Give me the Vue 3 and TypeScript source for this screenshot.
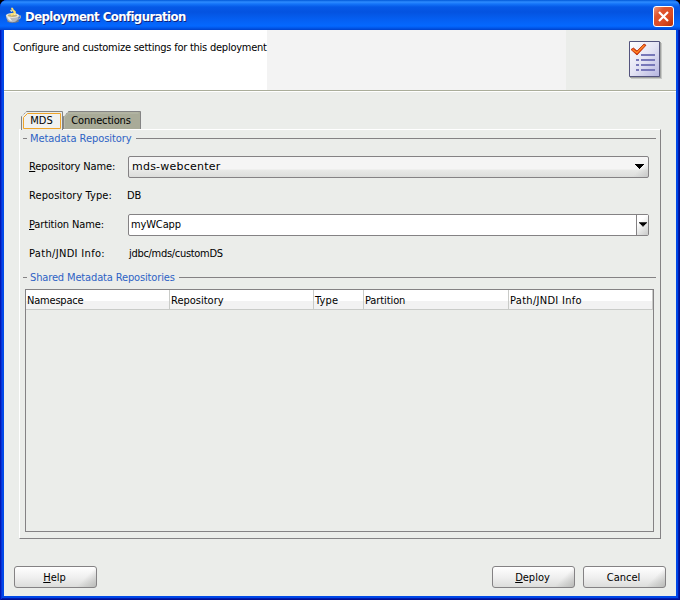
<script setup lang="ts">
import { ref } from 'vue'

interface Column {
  label: string
  width: number
  spacing: number
}

const activeTab = ref<string>('MDS')
const partition = ref<string>('myWCapp')
const columns: Column[] = [
  { label: 'Namespace', width: 144, spacing: -0.2 },
  { label: 'Repository', width: 144, spacing: 0 },
  { label: 'Type', width: 50, spacing: 0.2 },
  { label: 'Partition', width: 145, spacing: -0.1 },
  { label: 'Path/JNDI Info', width: 144, spacing: 0.3 },
]
</script>

<template>
  <div class="window">
    <header class="titlebar">
      <svg class="cup" width="18" height="18" viewBox="0 0 18 18">
        <ellipse cx="8" cy="14" rx="6" ry="1.8" fill="#777b83" />
        <path d="M13 9h2.2q1.2 2-2.6 3.4" fill="none" stroke="#a4a9b1" stroke-width="1.3" />
        <path d="M1 8.5Q1 14.8 7.3 15.2 13.7 14.8 14 8.5z" fill="#b7babf" />
        <path d="M2 9Q3 13.4 7 14 4.5 11 4.5 9z" fill="#f3f3ef" />
        <ellipse cx="7.5" cy="8.5" rx="6.5" ry="2.4" fill="#e7e5dc" />
        <ellipse cx="7.5" cy="8.6" rx="4.8" ry="1.3" fill="#c4b078" />
        <path d="M7 .8Q7 3 9 4.2 11 5.3 8.7 6.4L6 8.2" fill="none" stroke="#ffe16b" stroke-width="2" />
        <path d="M5.5 3.3l1.6 1.2M9 7.5l2-.8" stroke="#fff5b8" stroke-width="1.2" />
      </svg>
      <h1>Deployment Configuration</h1>
      <button class="close" aria-label="Close">
        <svg width="21" height="21" viewBox="0 0 21 21">
          <path d="M6 6l9 9M15 6l-9 9" stroke="#fff" stroke-width="2.2" />
        </svg>
      </button>
    </header>

    <main class="body">
      <section class="banner">
        <p>Configure and customize settings for this deployment</p>
        <svg class="checklist" width="36" height="40" viewBox="0 0 36 40">
          <defs>
            <linearGradient id="paper" x1="0" y1="0" x2="1" y2="1">
              <stop offset="0" stop-color="#fff" />
              <stop offset=".5" stop-color="#e4e4f4" />
              <stop offset="1" stop-color="#b4b4df" />
            </linearGradient>
          </defs>
          <path d="M3 3h31v36H3z" fill="#c7c9c6" />
          <path d="M2 2h31v36H2z" fill="#9fa19f" />
          <path d="M1.5 1.5h30v35h-30z" fill="url(#paper)" stroke="#53537d" />
          <path d="M13 14h14v2H13zM8 19h3v2H8zM13 19h14v2H13zM8 24h3v2H8zM13 24h14v2H13zM8 29h3v2H8zM13 29h14v2H13z" fill="#7777b9" />
          <path d="M3 9.5L5.5 8 9 11l7-7 2 1.2L9 15z" fill="#e03c08" stroke="#b52a08" stroke-width=".8" />
          <path d="M4.5 9.5L9 12.7l7.4-7.4" fill="none" stroke="#ff8a2b" stroke-width="1.4" />
        </svg>
      </section>

      <nav class="tabs">
        <button class="tab mds" @click="activeTab = 'MDS'">
          <svg width="43" height="19" viewBox="0 0 43 19">
            <path d="M.5 19V5.5l5-5h36V19" fill="#ebedea" stroke="#848484" />
            <path d="M2.5 17.5V6.5l4-4h33v15z" fill="#f1f2f0" stroke="#efa52b" />
            <path d="M1 5l4-4" stroke="#fff" stroke-dasharray="1 1" />
          </svg>
          <span>MDS</span>
        </button>
        <button class="tab connections" @click="activeTab = 'Connections'">
          <svg width="79" height="19" viewBox="0 0 79 19">
            <path d="M.5 18V5.5l5-5h72V18" fill="#a9ab98" stroke="#848484" />
            <path d="M1.5 17V6l4-4h70" fill="none" stroke="#b9bbab" />
            <path d="M1 5l4-4" stroke="#fff" stroke-dasharray="1 1" />
          </svg>
          <span>Connections</span>
        </button>
      </nav>

      <section class="panel">
        <div class="legend"><span class="metadata">Metadata Repository</span></div>
        <div class="form">
          <div class="row">
            <label class="name"><u>R</u>epository Name:</label>
            <div class="select">
              <span>mds-webcenter</span>
              <svg class="arrow" width="9" height="5" viewBox="0 0 9 5"><path d="M0 0h9v1H8v1H7v1H6v1H5v1H4V4H3V3H2V2H1V1H0z" /></svg>
            </div>
          </div>
          <div class="row"><label class="type">Repository Type:</label><span class="db">DB</span></div>
          <div class="row">
            <label class="name"><u>P</u>artition Name:</label>
            <div class="combo">
              <span>{{ partition }}</span>
              <div class="drop">
                <svg class="arrow" width="9" height="5" viewBox="0 0 9 5"><path d="M0 0h9v1H8v1H7v1H6v1H5v1H4V4H3V3H2V2H1V1H0z" /></svg>
              </div>
            </div>
          </div>
          <div class="row"><label class="info">Path/JNDI Info:</label><span class="path">jdbc/mds/customDS</span></div>
        </div>
        <div class="legend"><span class="shared">Shared Metadata Repositories</span></div>
        <div class="table">
          <div class="head">
            <div
              v-for="column in columns"
              :key="column.label"
              class="cell"
              :style="{ width: column.width + 'px', letterSpacing: column.spacing + 'px' }"
            >{{ column.label }}</div>
          </div>
        </div>
      </section>

      <footer class="actions">
        <button class="push help"><span><u>H</u>elp</span></button>
        <button class="push"><span><u>D</u>eploy</span></button>
        <button class="push"><span>Cancel</span></button>
      </footer>
    </main>
  </div>
</template>

<style>
body {
  margin: 0;
  background: #000;
}
</style>

<style scoped>
* {
  box-sizing: border-box;
}
.window {
  width: 680px;
  height: 600px;
  overflow: hidden;
  padding: 0 4px 4px;
  border-radius: 7px 7px 0 0;
  color: #000;
  background: #0048e8;
  box-shadow: inset 1px 0 #0019b5, inset -1px 0 #001090, inset 0 -1px #001090, inset 2px 0 #0831d9, inset -2px 0 #001bb0, inset 0 -2px #001bb0;
  font: 11px/14px "DejaVu Sans Condensed", "DejaVu Sans", sans-serif;
  font-stretch: condensed;
}
.titlebar {
  display: flex;
  align-items: center;
  height: 30px;
  margin: 0 -4px;
  padding: 3px 6px 0 5px;
  background: linear-gradient(#0058d8 0, #2e8cff 2px, #1474f8 4px, #0559e7 7px, #0453e0 12px, #0560f3 20px, #0468ff 26px, #0157ea 28px, #0041ca 30px);
}
.cup {
  margin-top: -2px;
}
h1 {
  flex: 1;
  margin: 0 0 0 2px;
  color: #fff;
  font-size: 13px;
  line-height: 18px;
  letter-spacing: -0.56px;
  white-space: nowrap;
  text-shadow: 1px 1px #10247e;
}
button {
  padding: 0;
  border: 0;
  color: inherit;
  background: none;
  font: inherit;
}
.close {
  width: 21px;
  height: 21px;
  border: 1px solid #fff;
  border-radius: 3px;
  background: linear-gradient(135deg, #ee987d, #df542e 30%, #dc4a22 65%, #b93006);
}
.close svg {
  display: block;
  margin: -1px;
}
.body {
  height: 566px;
  background: #ebedea;
}
.banner {
  display: flex;
  justify-content: space-between;
  height: 62px;
  padding: 10px 12px 0 9px;
  border-bottom: 1px solid #fff;
  background: linear-gradient(#aaad9a, #aaad9a) 0 60px / 100% 1px no-repeat, linear-gradient(90deg, #fff 263px, #f3f3f3 263px 562px, #ebedea 562px);
}
.banner p {
  margin: 1px 0 0;
  letter-spacing: -0.24px;
  white-space: nowrap;
}
.tabs {
  display: flex;
  height: 37px;
  padding: 19px 0 0 17px;
}
.tab {
  display: grid;
  height: 19px;
}
.tab > * {
  grid-area: 1 / 1;
}
.tab span {
  line-height: 19px;
}
.mds {
  width: 42px;
}
.mds span {
  padding-right: 2px;
}
.connections span {
  padding-right: 3px;
  letter-spacing: -0.15px;
}
.panel {
  width: 642px;
  height: 410px;
  margin-left: 15px;
  padding: 2px 4px 0 4px;
  border: 1px solid #848284;
  border-top-color: #fff;
  border-left-color: #fff;
}
.legend {
  display: flex;
  align-items: center;
  height: 14px;
  gap: 4px;
  margin-left: -1px;
  color: #2e63c5;
}
.legend::before,
.legend::after {
  content: "";
  height: 1px;
  margin-bottom: 2px;
  background: #848284;
}
.legend::before {
  width: 4px;
}
.legend::after {
  flex: 1;
}
.legend span {
  margin-left: -1px;
}
.metadata {
  letter-spacing: -0.05px;
}
.shared {
  letter-spacing: -0.14px;
}
.form {
  display: flex;
  flex-direction: column;
  height: 125px;
  padding: 6px 7px 0 5px;
}
.row {
  display: flex;
  align-items: center;
  height: 29px;
}
label {
  width: 99px;
  white-space: nowrap;
}
.name {
  letter-spacing: -0.13px;
}
.type {
  letter-spacing: 0.08px;
}
.info {
  letter-spacing: 0.33px;
}
.db {
  margin-left: -1px;
}
.path {
  margin-left: 1px;
  letter-spacing: -0.3px;
}
.select,
.combo {
  display: flex;
  align-items: center;
  flex: 1;
  height: 22px;
  border: 1px solid #848284;
  border-radius: 2px;
}
.select {
  justify-content: space-between;
  padding: 0 4px 0 3px;
  background: linear-gradient(135deg, transparent 97%, #c8c9c8), linear-gradient(#f5f5f5 0 12px, #e8e9e7 13px, #dcdddb);
  font-family: "DejaVu Sans", sans-serif;
  font-stretch: normal;
  letter-spacing: 0.22px;
}
.combo {
  background: #fff;
}
.combo > span {
  flex: 1;
  padding-left: 2px;
  letter-spacing: -0.14px;
}
.drop {
  display: flex;
  align-items: center;
  justify-content: center;
  width: 12px;
  height: 20px;
  border-left: 1px solid #848284;
  background: linear-gradient(135deg, #fff 30%, #c8c9c8);
}
.arrow {
  display: block;
  flex: none;
}
.drop .arrow {
  width: 8px;
}
.table {
  width: 629px;
  height: 243px;
  margin: 4px 0 0 1px;
  border: 1px solid #848284;
}
.head {
  display: flex;
  height: 20px;
  border-bottom: 1px solid #c9cbc8;
  background: linear-gradient(#fff 0 11px, #f2f2f2 11px);
}
.cell {
  padding-left: 1px;
  border-right: 1px solid #c9cbc8;
  line-height: 21px;
  white-space: nowrap;
}
.actions {
  display: flex;
  gap: 8px;
  padding: 27px 10px 0;
}
.push {
  width: 83px;
  height: 22px;
  padding: 1px 2px 0 0;
  border: 1px solid #848284;
  border-radius: 3px;
  background: linear-gradient(135deg, transparent 80%, #babbb9), linear-gradient(#fff, #f0f0f0 50%, #dcdddb);
}
.help {
  margin-right: auto;
}
</style>
